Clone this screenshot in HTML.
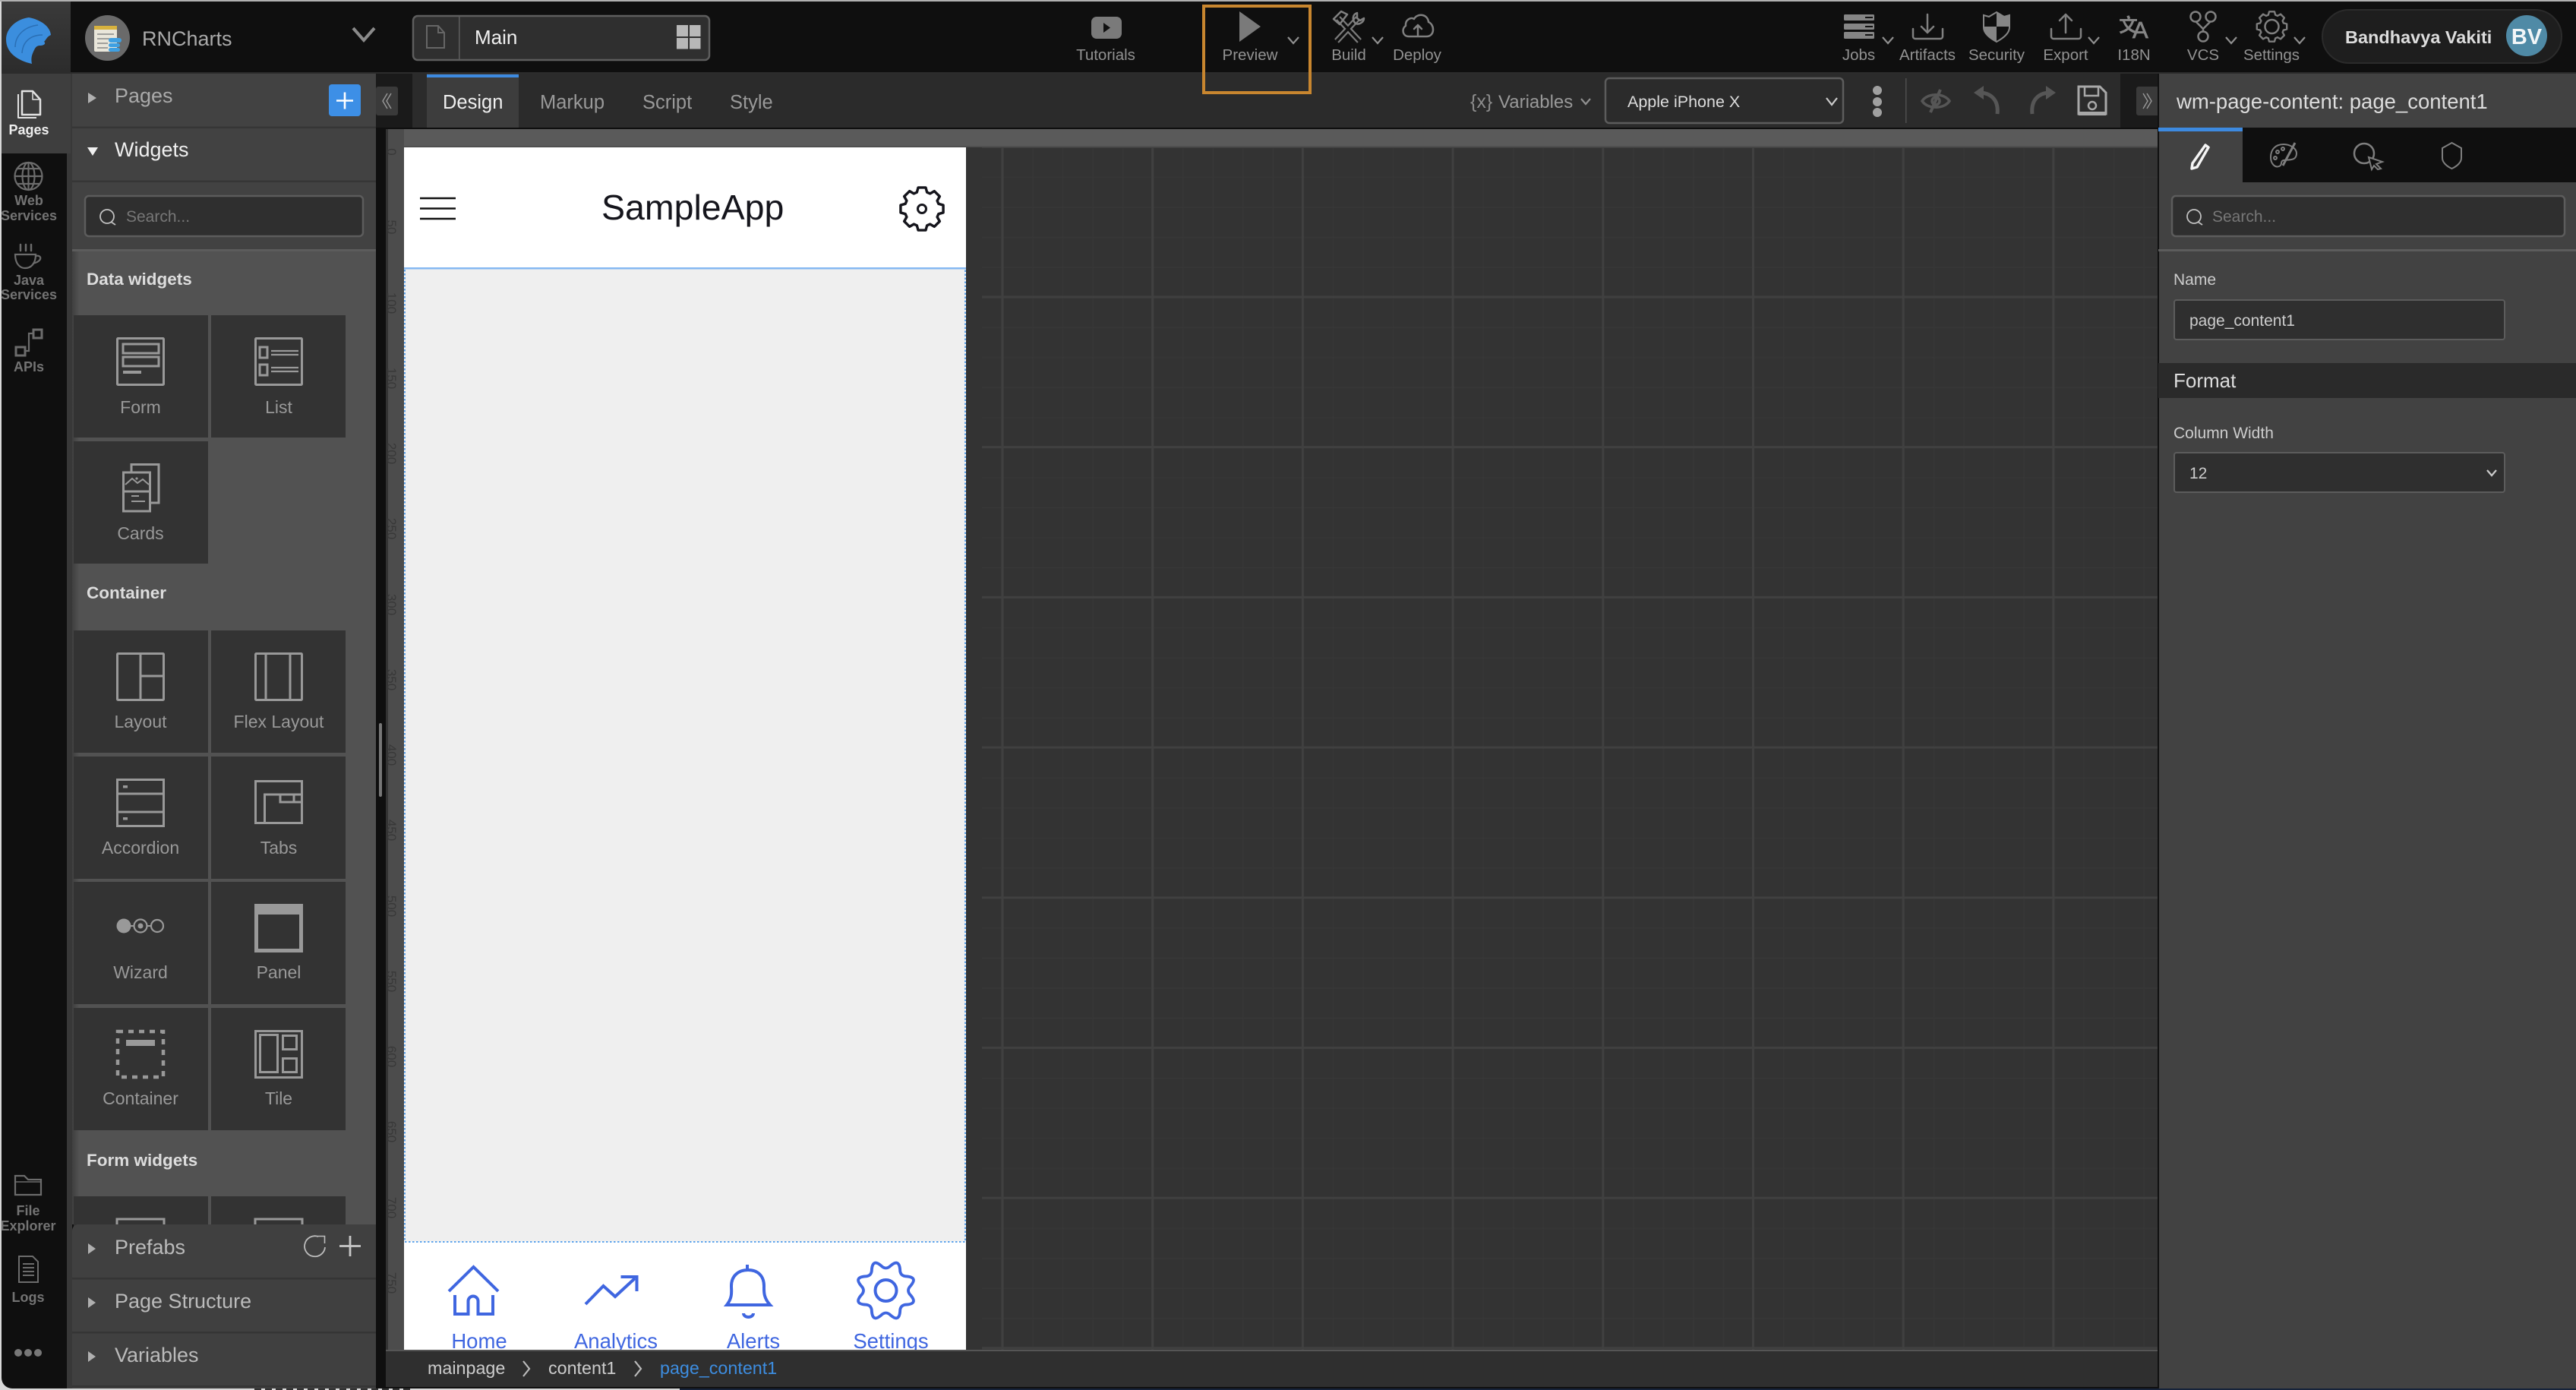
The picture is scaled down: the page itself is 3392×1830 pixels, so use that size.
<!DOCTYPE html>
<html lang="en">
<head>
<meta charset="utf-8">
<title>RNCharts</title>
<style>
html,body{margin:0;padding:0;width:3392px;height:1830px;overflow:hidden;background:#d8d8d8}
svg{display:block;font-family:"Liberation Sans",Arial,sans-serif}
.wl{font-size:23px;fill:#999;text-anchor:middle}
.wh{font-size:22.5px;font-weight:bold;fill:#ddd}
.tb{font-size:20.5px;fill:#929292;text-anchor:middle}
.rl{font-size:18px;font-weight:bold;fill:#737373;text-anchor:middle}
.ic{fill:none;stroke:#999;stroke-width:3}
.tbi{fill:none;stroke:#808080;stroke-width:2.5;stroke-linejoin:round;stroke-linecap:round}
.chev{fill:none;stroke:#909090;stroke-width:2.2}
.ft{font-size:27.5px;fill:#3f66e0;text-anchor:middle}
.fi{fill:none;stroke:#3f66e0;stroke-width:4}
.rn{font-size:17px;fill:#383838;text-anchor:middle}
</style>
</head>
<body>
<svg width="3392" height="1830" viewBox="0 0 3392 1830" xmlns="http://www.w3.org/2000/svg">
<defs>
<pattern id="grid" patternUnits="userSpaceOnUse" x="1318.5" y="389.5" width="197.7" height="197.7">
<rect width="197.7" height="197.7" fill="#333"/>
<g fill="#373737">
<rect x="41" y="0" width="1.2" height="197.7"/><rect x="80.6" y="0" width="1.2" height="197.7"/><rect x="120.1" y="0" width="1.2" height="197.7"/><rect x="159.7" y="0" width="1.2" height="197.7"/>
<rect y="41" x="0" height="1.2" width="197.7"/><rect y="80.6" x="0" height="1.2" width="197.7"/><rect y="120.1" x="0" height="1.2" width="197.7"/><rect y="159.7" x="0" height="1.2" width="197.7"/>
</g>
<rect x="0" y="0" width="3" height="197.7" fill="#404040"/>
<rect x="0" y="0" width="197.7" height="3" fill="#404040"/>
</pattern>
<path id="gear" d="M76.5 -23.4L98.5 -17.4L98.5 17.4L76.5 23.4L70.6 37.6L81.9 57.4L57.4 81.9L37.6 70.6L23.4 76.5L17.4 98.5L-17.4 98.5L-23.4 76.5L-37.6 70.6L-57.4 81.9L-81.9 57.4L-70.6 37.6L-76.5 23.4L-98.5 17.4L-98.5 -17.4L-76.5 -23.4L-70.6 -37.6L-81.9 -57.4L-57.4 -81.9L-37.6 -70.6L-23.4 -76.5L-17.4 -98.5L17.4 -98.5L23.4 -76.5L37.6 -70.6L57.4 -81.9L81.9 -57.4L70.6 -37.6Z"/>
<linearGradient id="lg" x1="0" y1="0" x2="0" y2="1"><stop offset="0" stop-color="#3a3a3a"/><stop offset="1" stop-color="#2c2c2c"/></linearGradient>
<linearGradient id="wsh" x1="0" y1="0" x2="1" y2="0"><stop offset="0" stop-color="#000" stop-opacity=".22"/><stop offset="1" stop-color="#000" stop-opacity="0"/></linearGradient>
</defs>

<!-- page behind the window -->
<rect width="3392" height="1830" fill="#d8d8d8"/>
<path d="M335 1829H542" stroke="#333" stroke-width="2" stroke-dasharray="9 5"/>
<rect x="895" y="1828" width="2497" height="2" fill="#16233a"/>
<rect x="0" y="0" width="3392" height="2" fill="#b0b0b0"/>
<rect x="2" y="2" width="3390" height="1826" rx="14" fill="#0f0f0f"/>
<rect x="1000" y="2" width="2392" height="1826" fill="#0f0f0f"/>

<!-- header -->
<rect x="2" y="2" width="91" height="93" fill="url(#lg)"/>
<rect x="2" y="95" width="3390" height="2.5" fill="#2c2c2c"/>
<path d="M38 23C54 26 66 35 67 46C62 48 61 52 58 55C61 57 58 60 53 60C47 60 46 64 44 68C41 74 41 79 42 84C24 80 8 70 8 52C8 37 22 25 38 23Z" fill="#3b8ede"/>
<path d="M50 33C33 35 20 46 20 62M56 46C41 46 30 54 29 70" fill="none" stroke="#2a6fb5" stroke-width="1.5"/>
<ellipse cx="141.5" cy="50" rx="29.5" ry="30" fill="#6a6a6a"/>
<rect x="124" y="34" width="30" height="34" rx="2" fill="#e9e6da"/>
<rect x="124" y="34" width="30" height="5" fill="#d7b23e"/>
<g stroke="#888" stroke-width="1.5"><path d="M128 45H150M128 51H146M128 57H142M128 63H142"/></g>
<g fill="#3fa0e2"><rect x="143" y="50" width="17" height="6" rx="3"/><rect x="143" y="57" width="15" height="5" rx="2.5"/><rect x="143" y="63" width="15" height="5" rx="2.5"/></g>
<text x="187" y="60" font-size="27" fill="#aaa">RNCharts</text>
<path d="M465 37L479 53L493 37" fill="none" stroke="#8a8a8a" stroke-width="4"/>
<rect x="544" y="21" width="390" height="58" rx="6" fill="#2f2f2f" stroke="#5e5e5e" stroke-width="2.5"/>
<rect x="604" y="21" width="1.5" height="58" fill="#5e5e5e"/>
<path d="M562 34H577L585 43V63H562Z M577 34V43H585" fill="none" stroke="#666" stroke-width="2"/>
<text x="625" y="58" font-size="26" fill="#f0f0f0">Main</text>
<g fill="#b8b8b8"><rect x="891" y="33" width="15" height="15"/><rect x="908" y="33" width="14.5" height="15"/><rect x="891" y="50" width="15" height="14.5"/><rect x="908" y="50" width="14.5" height="14.5"/></g>

<!-- header toolbar center -->
<rect x="1437" y="22" width="40" height="29" rx="7" fill="#7a7a7a"/>
<path d="M1453 30L1462 36.5L1453 43Z" fill="#111"/>
<text class="tb" x="1456" y="79">Tutorials</text>
<path d="M1632 15L1660 35L1632 55Z" fill="#7a7a7a"/>
<text class="tb" x="1646" y="79">Preview</text>
<path class="chev" d="M1696 49L1703 57L1710 49"/>
<path d="M1762 24L1790 54M1760 54L1788 24" stroke="#7a7a7a" stroke-width="8" fill="none"/>
<path d="M1762 24L1790 54M1760 54L1788 24" stroke="#0f0f0f" stroke-width="3.5" fill="none"/>
<path class="tbi" d="M1756 25L1766 15L1774 19L1764 32ZM1787 17C1781 19 1780 26 1785 31C1790 33 1796 29 1796 24L1791 27L1787 24Z"/>
<path class="chev" d="M1807 49L1814 57L1821 49"/>
<text class="tb" x="1776" y="79">Build</text>
<path class="tbi" d="M1855 48C1847 48 1845 38 1851 34C1850 26 1858 22 1862 25C1866 17 1880 18 1881 29C1889 32 1890 48 1878 48Z M1867 46V33M1862 38L1867 33L1872 38"/>
<text class="tb" x="1866" y="79">Deploy</text>

<!-- header toolbar right -->
<g fill="#858585"><rect x="2428" y="19" width="40" height="8" rx="1.5"/><rect x="2428" y="31" width="40" height="8" rx="1.5"/><rect x="2428" y="42" width="40" height="9" rx="1.5"/></g>
<g fill="#111"><rect x="2456" y="22" width="10" height="2"/><rect x="2456" y="34" width="10" height="2"/><rect x="2456" y="45" width="10" height="2"/></g>
<path class="chev" d="M2479 49L2486 57L2493 49"/>
<text class="tb" x="2447.5" y="79">Jobs</text>
<path class="tbi" d="M2538 19V43M2530 35L2538 43L2546 35M2519 38V48A3 3 0 0 0 2522 51H2555A3 3 0 0 0 2558 48V38"/>
<text class="tb" x="2538" y="79">Artifacts</text>
<path d="M2612 20L2619 22L2629 16L2639 22L2646 20V36C2646 44 2638 50 2629 55C2620 50 2612 44 2612 36Z" fill="#0f0f0f" stroke="#858585" stroke-width="2"/>
<path d="M2629 16L2639 22L2646 20V35H2629ZM2629 35H2612C2612 44 2620 50 2629 55Z" fill="#858585"/>
<text class="tb" x="2629" y="79">Security</text>
<path class="tbi" d="M2720 43V19M2712 27L2720 19L2728 27M2701 38V48A3 3 0 0 0 2704 51H2737A3 3 0 0 0 2740 48V38"/>
<path class="chev" d="M2750 49L2757 57L2764 49"/>
<text class="tb" x="2720" y="79">Export</text>
<text x="2790" y="42" font-size="25" font-weight="bold" fill="#858585" font-family="'Noto Sans CJK SC',sans-serif">文</text>
<text x="2808" y="50" font-size="31" fill="#858585" stroke="#858585" stroke-width=".8">A</text>
<text class="tb" x="2810" y="79">I18N</text>
<g class="tbi"><circle cx="2891" cy="22" r="6.5"/><circle cx="2911" cy="22" r="6.5"/><ellipse cx="2901" cy="48" rx="6.5" ry="6.5"/><path d="M2892 29L2901 38L2910 29M2901 38V41"/></g>
<path class="chev" d="M2931 49L2938 57L2945 49"/>
<text class="tb" x="2901" y="79">VCS</text>
<use href="#gear" transform="translate(2991.5 35) scale(.2)" fill="none" stroke="#7e7e7e" stroke-width="12" stroke-linejoin="round"/>
<circle cx="2991.5" cy="35" r="9" class="tbi"/>
<path class="chev" d="M3021 49L3028 57L3035 49"/>
<text class="tb" x="2991" y="79">Settings</text>
<rect x="3058" y="13" width="315" height="70" rx="35" fill="#1e1e1e" stroke="#2b2b2b" stroke-width="2"/>
<text x="3088" y="57" font-size="23.5" font-weight="bold" fill="#ddd">Bandhavya Vakiti</text>
<ellipse cx="3327" cy="47" rx="27" ry="27" fill="#4f8aa6"/>
<text x="3327" y="58" font-size="29" font-weight="bold" fill="#f2f6f8" text-anchor="middle">BV</text>

<!-- left rail -->
<rect x="88" y="97" width="7" height="1731" fill="#383838"/>
<rect x="2" y="97" width="91" height="105" fill="#3e3e3e"/>
<g fill="none" stroke="#e2e2e2" stroke-width="2.5" stroke-linejoin="round">
<path d="M29 120H43L53 131V151H29Z"/><path d="M24 124V155H48" stroke-width="2"/><path d="M43 120V131H53" stroke-width="1.5"/>
</g>
<text class="rl" x="38" y="177" style="fill:#eee">Pages</text>
<g fill="none" stroke="#6c6c6c" stroke-width="2.2">
<circle cx="37.5" cy="232" r="18"/><ellipse cx="37.5" cy="232" rx="8" ry="18"/><path d="M37.5 214V250M19.5 232H55.5M22 222H53M22 242H53"/>
<path d="M27 330V322M34 330V322M41 330V322" stroke-linecap="round" stroke-width="2.5"/>
<path d="M20 335H47C47 347 41 353 33 353C26 353 20 347 20 335ZM47 337C55 335 57 344 43 347"/>
</g>
<text class="rl" x="38" y="270">Web</text>
<text class="rl" x="38" y="290">Services</text>
<text class="rl" x="38" y="375">Java</text>
<text class="rl" x="38" y="394">Services</text>
<g fill="none" stroke="#6c6c6c" stroke-width="3"><rect x="21" y="457" width="12" height="11"/><rect x="44" y="434" width="11" height="11"/><path d="M33 462H38V439H44" stroke-width="2.2"/></g>
<text class="rl" x="38" y="489">APIs</text>
<path d="M20 1573V1548H32L37 1553H54V1573Z" fill="none" stroke="#6c6c6c" stroke-width="2.2"/>
<path d="M20 1556H54" fill="none" stroke="#6c6c6c" stroke-width="1.5"/>
<text class="rl" x="37" y="1600">File</text>
<text class="rl" x="37" y="1620">Explorer</text>
<path d="M25 1654H43L50 1661V1688H25ZM30 1664H45M30 1669H45M30 1674H45M30 1679H45" fill="none" stroke="#6c6c6c" stroke-width="2"/>
<text class="rl" x="37" y="1714">Logs</text>
<g fill="#777"><circle cx="24" cy="1781" r="5"/><circle cx="37" cy="1781" r="5"/><circle cx="50" cy="1781" r="5"/></g>

<!-- left panel -->
<rect x="95" y="97" width="400" height="234" fill="#424242"/>
<rect x="95" y="166.5" width="400" height="2.5" fill="#363636"/>
<rect x="95" y="237.5" width="400" height="2.5" fill="#363636"/>
<rect x="95" y="328" width="400" height="3" fill="#5c5c5c"/>
<path d="M116 122L127 129L116 136Z" fill="#b0b0b0"/>
<text x="151" y="135" font-size="27" fill="#aaa">Pages</text>
<rect x="433" y="111" width="42" height="42" rx="4" fill="#3d8fe6"/>
<path d="M443 132.500H465M454 121.500V143.500" stroke="#fff" stroke-width="2.6"/>
<path d="M115 194H129L122 205Z" fill="#f0f0f0"/>
<text x="151" y="206" font-size="27" fill="#f0f0f0">Widgets</text>
<rect x="112" y="258" width="366" height="53" rx="5" fill="#2f2f2f" stroke="#5c5c5c" stroke-width="2.5"/>
<circle cx="141" cy="285" r="9" fill="none" stroke="#c0c0c0" stroke-width="1.8"/><path d="M146 292L152 296" stroke="#c0c0c0" stroke-width="1.8"/>
<text x="166" y="292" font-size="21" fill="#777">Search...</text>

<!-- widgets -->
<rect x="95" y="331" width="400" height="1281" fill="#525252"/>
<rect x="95" y="331" width="10" height="1281" fill="url(#wsh)"/>
<text class="wh" x="114" y="375">Data widgets</text>
<text class="wh" x="114" y="788">Container</text>
<text class="wh" x="114" y="1535">Form widgets</text>
<g fill="#333">
<rect x="97" y="415" width="177" height="161"/><rect x="278" y="415" width="177" height="161"/>
<rect x="97" y="581" width="177" height="161"/>
<rect x="97" y="830" width="177" height="161"/><rect x="278" y="830" width="177" height="161"/>
<rect x="97" y="996" width="177" height="161"/><rect x="278" y="996" width="177" height="161"/>
<rect x="97" y="1161" width="177" height="161"/><rect x="278" y="1161" width="177" height="161"/>
<rect x="97" y="1327" width="177" height="161"/><rect x="278" y="1327" width="177" height="161"/>
<rect x="97" y="1575" width="177" height="40"/><rect x="278" y="1575" width="177" height="40"/>
</g>
<text class="wl" x="185" y="544">Form</text><text class="wl" x="367" y="544">List</text>
<text class="wl" x="185" y="710">Cards</text>
<text class="wl" x="185" y="958">Layout</text><text class="wl" x="367" y="958">Flex Layout</text>
<text class="wl" x="185" y="1124">Accordion</text><text class="wl" x="367" y="1124">Tabs</text>
<text class="wl" x="185" y="1288">Wizard</text><text class="wl" x="367" y="1288">Panel</text>
<text class="wl" x="185" y="1454">Container</text><text class="wl" x="367" y="1454">Tile</text>

<g transform="translate(153 444)" class="ic"><rect x="1.5" y="1.500" width="61" height="61" rx="1"/><rect x="9" y="9" width="47" height="12"/><rect x="9" y="26" width="47" height="12"/><rect x="9" y="44" width="24" height="4" fill="#999" stroke="none"/></g>
<g transform="translate(335 444)" class="ic"><rect x="1.5" y="1.500" width="61" height="61" rx="1"/><rect x="7" y="13" width="10" height="14"/><rect x="7" y="36" width="10" height="14"/><path d="M22 18H58M22 23H58M22 40H58M22 45H58" stroke-width="2.2"/></g>
<g transform="translate(161 610)" class="ic"><path d="M12 11V1.500H48V52H38"/><rect x="1.500" y="12" width="35" height="51"/><path d="M1.500 37H36.500" /><path d="M4 28L13 20L20 26L27 21L35 28" stroke-width="2"/><circle cx="19" cy="20" r="1.6" fill="#999" stroke="none"/><path d="M12 43H22M12 50H30" stroke-width="2"/></g>

<g transform="translate(153 859)" class="ic"><rect x="1.5" y="1.500" width="61" height="61" rx="1"/><path d="M32 1.500V62.500M32 31H62.500"/></g>
<g transform="translate(335 859)" class="ic"><rect x="1.5" y="1.500" width="61" height="61" rx="1"/><path d="M15 1.500V62.500M47 1.500V62.500"/></g>
<g transform="translate(153 1025)" class="ic"><rect x="1.5" y="1.500" width="61" height="61"/><path d="M1.500 20H62.500M1.500 44H62.500"/><rect x="9" y="9" width="6" height="3.500" fill="#999" stroke="none"/><rect x="9" y="51" width="6" height="3.500" fill="#999" stroke="none"/></g>
<g transform="translate(335 1027)" class="ic"><rect x="1.5" y="1.500" width="61" height="55"/><path d="M13.500 56V19H62M34 19V29H62M52 19V29"/></g>
<g transform="translate(153 1190)" class="ic"><circle cx="10" cy="29" r="9.500" fill="#999" stroke="none"/><circle cx="32" cy="29" r="8.500" stroke-width="2.200"/><circle cx="32" cy="29" r="3.500" fill="#999" stroke="none"/><circle cx="54" cy="29" r="8" stroke-width="2.200"/><path d="M19 29H23M41 29H46" stroke-width="2"/></g>
<g transform="translate(335 1190)"><rect width="64" height="64" fill="#999"/><rect x="5" y="14" width="54" height="45" fill="#333"/></g>
<g transform="translate(153 1356)" class="ic"><rect x="2" y="2" width="60" height="60" stroke-width="4.500" stroke-dasharray="7 7"/><rect x="13" y="13" width="38" height="8" fill="#999" stroke="none"/></g>
<g transform="translate(335 1356)" class="ic"><rect x="1.5" y="1.500" width="61" height="61"/><rect x="7.500" y="6.500" width="23" height="49"/><rect x="37.500" y="7.500" width="18" height="18"/><rect x="37.500" y="37.500" width="18" height="18"/></g>
<rect x="154" y="1605" width="62" height="20" fill="none" stroke="#999" stroke-width="3"/>
<rect x="336" y="1605" width="62" height="20" fill="none" stroke="#999" stroke-width="3"/>

<!-- prefabs etc -->
<path d="M95 1828V1620A8 8 0 0 1 103 1612H495V1828Z" fill="#404040"/>
<rect x="95" y="1682" width="400" height="2.500" fill="#353535"/>
<rect x="95" y="1753" width="400" height="2.500" fill="#353535"/>
<rect x="95" y="1824" width="400" height="2.500" fill="#353535"/>
<path d="M116 1637L126 1644L116 1651Z" fill="#b0b0b0"/>
<path d="M116 1708L126 1715L116 1722Z" fill="#b0b0b0"/>
<path d="M116 1779L126 1786L116 1793Z" fill="#b0b0b0"/>
<text x="151" y="1651" font-size="27" fill="#bbb">Prefabs</text>
<text x="151" y="1722" font-size="27" fill="#bbb">Page Structure</text>
<text x="151" y="1793" font-size="27" fill="#bbb">Variables</text>
<path d="M419 1628A13.500 13.500 0 1 0 428 1642" fill="none" stroke="#bdbdbd" stroke-width="1.800"/>
<path d="M418 1627.500H427.500V1637" fill="none" stroke="#bdbdbd" stroke-width="1.600"/>
<path d="M447 1640.500H475M461 1627V1654" stroke="#c8c8c8" stroke-width="2.800"/>

<!-- splitter -->
<rect x="495" y="97" width="13" height="1731" fill="#0f0f0f"/>
<rect x="499" y="952" width="4" height="97" rx="2" fill="#777"/>

<!-- design tabs -->
<rect x="508" y="97" width="2284" height="71" fill="#2b2b2b"/>
<rect x="495" y="97" width="48" height="71" fill="#1a1a1a"/>
<rect x="495" y="114" width="29" height="38" rx="3" fill="#3a3a3a"/>
<path d="M510 123L504 133L510 143M515 123L509 133L515 143" fill="none" stroke="#999" stroke-width="1.400"/>
<rect x="562" y="97" width="121" height="71" fill="#3d3d3d"/>
<rect x="562" y="98" width="121" height="4" fill="#3d8ae0"/>
<g font-size="25.5"><text x="583" y="143" fill="#f0f0f0">Design</text><text x="711" y="143" fill="#999">Markup</text><text x="846" y="143" fill="#999">Script</text><text x="961" y="143" fill="#999">Style</text></g>

<text x="1936" y="142" font-size="25" fill="#8c8c8c">{x}</text>
<text x="1973" y="142" font-size="24" fill="#999">Variables</text>
<path class="chev" d="M2082 130L2088 137L2094 130"/>
<rect x="2114" y="103" width="313" height="59" rx="5" fill="#2b2b2b" stroke="#5c5c5c" stroke-width="2.500"/>
<text x="2143" y="141" font-size="21.500" fill="#ddd">Apple iPhone X</text>
<path class="chev" d="M2405 129L2412 138L2419 129" style="stroke:#ccc"/>
<g fill="#a0a0a0"><circle cx="2472" cy="119" r="6"/><circle cx="2472" cy="134" r="6"/><circle cx="2472" cy="148" r="6"/></g>
<rect x="2509" y="103" width="1.500" height="59" fill="#4e4e4e"/>
<g fill="none" stroke="#565656" stroke-width="3.500"><path d="M2531 133C2538 122 2560 122 2567 133C2560 144 2538 144 2531 133Z"/><path d="M2555 118L2542 148" stroke-width="4"/><circle cx="2549" cy="133" r="5"/></g>
<path d="M2630 150C2632 132 2622 122 2606 122" fill="none" stroke="#565656" stroke-width="5"/>
<path d="M2599 122L2612 113V131Z" fill="#565656"/>
<path d="M2676 150C2674 132 2684 122 2700 122" fill="none" stroke="#565656" stroke-width="5"/>
<path d="M2707 122L2694 113V131Z" fill="#565656"/>
<path d="M2737 114H2765L2773 122V150H2737Z" fill="none" stroke="#a8a8a8" stroke-width="3"/>
<rect x="2737" y="147" width="36" height="5" fill="#a8a8a8"/>
<rect x="2745" y="114" width="18" height="12" fill="none" stroke="#a8a8a8" stroke-width="2.500"/>
<circle cx="2755" cy="139" r="5" fill="none" stroke="#a8a8a8" stroke-width="2.500"/>
<rect x="2792" y="97" width="50" height="71" fill="#1a1a1a"/>
<path d="M2842 114H2816A3 3 0 0 0 2813 117V149A3 3 0 0 0 2816 152H2842Z" fill="#3a3a3a"/>
<path d="M2822 123L2828 133L2822 143M2827 123L2833 133L2827 143" fill="none" stroke="#999" stroke-width="1.400"/>
<rect x="495" y="168" width="2347" height="2.500" fill="#0f0f0f"/>

<!-- canvas -->
<rect x="508" y="170" width="2334" height="24" fill="#5a5a5a"/>
<rect x="532" y="192.500" width="2310" height="1.500" fill="#4a4a4a"/>
<rect x="508" y="170" width="3" height="1610" fill="#333"/>
<rect x="511" y="170" width="21" height="1610" fill="#4c4c4c"/>
<rect x="1272" y="194" width="1570" height="1584" fill="#333"/>
<rect x="1293" y="194" width="1549" height="1584" fill="url(#grid)"/>
<g class="rn">
<text class="rn" x="516" y="206" transform="rotate(90 516 200)">0</text>
<text class="rn" x="516" y="305" transform="rotate(90 516 299)">50</text>
<text class="rn" x="516" y="405" transform="rotate(90 516 399)">100</text>
<text class="rn" x="516" y="504" transform="rotate(90 516 498)">150</text>
<text class="rn" x="516" y="603" transform="rotate(90 516 597)">200</text>
<text class="rn" x="516" y="702" transform="rotate(90 516 696)">250</text>
<text class="rn" x="516" y="802" transform="rotate(90 516 796)">300</text>
<text class="rn" x="516" y="901" transform="rotate(90 516 895)">350</text>
<text class="rn" x="516" y="1000" transform="rotate(90 516 994)">400</text>
<text class="rn" x="516" y="1099" transform="rotate(90 516 1093)">450</text>
<text class="rn" x="516" y="1199" transform="rotate(90 516 1193)">500</text>
<text class="rn" x="516" y="1298" transform="rotate(90 516 1292)">550</text>
<text class="rn" x="516" y="1397" transform="rotate(90 516 1391)">600</text>
<text class="rn" x="516" y="1496" transform="rotate(90 516 1490)">650</text>
<text class="rn" x="516" y="1596" transform="rotate(90 516 1590)">700</text>
<text class="rn" x="516" y="1695" transform="rotate(90 516 1689)">750</text>
</g>

<!-- phone -->
<rect x="532" y="194" width="740" height="1584" fill="#fff"/>
<rect x="532" y="352" width="740" height="2.500" fill="#86b9f2"/>
<rect x="533" y="354.500" width="738" height="1280" fill="#efefef"/>
<path d="M533 355V1635H1271V355" fill="none" stroke="#2f8ae8" stroke-width="1.500" stroke-dasharray="2.500 2.500"/>
<path d="M553 261H600M553 274.500H600M553 288H600" stroke="#111" stroke-width="2.500"/>
<text x="792" y="289" font-size="46.5" fill="#15151c">SampleApp</text>
<use href="#gear" transform="translate(1214 275) scale(.285)" fill="none" stroke="#15151c" stroke-width="12" stroke-linejoin="round"/>
<circle cx="1214" cy="275" r="5.500" fill="none" stroke="#15151c" stroke-width="3"/>

<g class="fi">
<path d="M591 1700L623.500 1668L656 1700"/>
<path d="M599 1705V1730H616.500V1713A6.500 6.500 0 0 1 629.500 1713V1730H649V1705"/>
<path d="M771 1717L794.500 1693L810 1707L836 1683"/>
<path d="M817.500 1681H838.500V1700"/>
<path d="M984 1665V1672M957 1718C965 1708 963 1700 963 1693C963 1680 972 1672 985 1672C998 1672 1006 1680 1006 1693C1006 1700 1005 1708 1014 1718Z"/>
<path d="M979 1729A6.500 5 0 0 0 992 1729"/>
<path transform="translate(1166.500 1699) scale(.385)" stroke-width="10" d="M85.300 -17Q68 0 85.300 17Q109 45 72.300 48.300Q48 48 48.300 72.300Q45 109 17 85.300Q0 68 -17 85.300Q-45 109 -48.300 72.300Q-48 48 -72.300 48.300Q-109 45 -85.300 17Q-68 0 -85.300 -17Q-109 -45 -72.300 -48.300Q-48 -48 -48.300 -72.300Q-45 -109 -17 -85.300Q0 -68 17 -85.300Q45 -109 48.300 -72.300Q48 -48 72.300 -48.300Q109 -45 85.300 -17Z"/>
<circle cx="1166.500" cy="1699" r="14"/>
</g>
<text class="ft" x="631" y="1775">Home</text>
<text class="ft" x="811" y="1775">Analytics</text>
<text class="ft" x="992" y="1775">Alerts</text>
<text class="ft" x="1173" y="1775">Settings</text>

<!-- breadcrumb -->
<rect x="508" y="1777" width="2334" height="2.500" fill="#555"/>
<rect x="508" y="1779" width="2334" height="47" fill="#2f2f2f"/>
<rect x="508" y="1826" width="2334" height="2" fill="#0f0f0f"/>
<text x="563" y="1809" font-size="23.300" fill="#ccc">mainpage</text>
<path d="M689 1792L697 1802L689 1812" fill="none" stroke="#bbb" stroke-width="2.200"/>
<text x="722" y="1809" font-size="23.300" fill="#ccc">content1</text>
<path d="M836 1792L844 1802L836 1812" fill="none" stroke="#bbb" stroke-width="2.200"/>
<text x="869" y="1809" font-size="23.300" fill="#3d8de0">page_content1</text>

<!-- right panel -->
<rect x="2842" y="97" width="550" height="1731" fill="#424242"/>
<rect x="2841" y="97" width="2" height="1731" fill="#111"/>
<text x="2866" y="143" font-size="27.500" fill="#ddd">wm-page-content: page_content1</text>
<rect x="2953" y="168" width="439" height="72" fill="#0f0f0f"/>
<rect x="2842" y="168" width="111" height="5" fill="#3d8ae0"/>
<path d="M2904 191L2908 194L2893 220L2886 222L2887 215Z" fill="none" stroke="#f5f5f5" stroke-width="3.500" stroke-linejoin="round"/>
<g fill="none" stroke="#7e7e7e" stroke-width="2">
<path d="M3007 190C2995 190 2990 198 2990 207C2990 216 2996 221 3001 219C3006 217 3002 212 3007 211C3014 210 3024 212 3024 202C3024 195 3015 190 3007 190Z"/>
<path d="M3022 188L3006 218" stroke-width="3"/>
<circle cx="2999" cy="200" r="2"/><circle cx="3006" cy="196" r="2"/><circle cx="2996" cy="208" r="2"/>
<circle cx="3113" cy="202" r="13" stroke-width="2.500"/>
<path d="M3119 207L3137 213L3129 216L3135 222L3131 223L3126 218L3123 223Z" fill="#0f0f0f"/>
<path d="M3228.500 188L3241 195V208C3241 214 3235 219 3228.500 222C3222 219 3216 214 3216 208V195Z"/>
</g>
<rect x="2860" y="258" width="517" height="53" rx="5" fill="#2f2f2f" stroke="#5c5c5c" stroke-width="2.500"/>
<circle cx="2889" cy="285" r="9" fill="none" stroke="#c0c0c0" stroke-width="1.800"/><path d="M2894 292L2900 296" stroke="#c0c0c0" stroke-width="1.800"/>
<text x="2913" y="292" font-size="21" fill="#777">Search...</text>
<rect x="2842" y="328" width="550" height="3" fill="#5c5c5c"/>
<text x="2862" y="375" font-size="21" fill="#ccc">Name</text>
<rect x="2863" y="395" width="435" height="52" rx="3" fill="#2f2f2f" stroke="#5c5c5c" stroke-width="2"/>
<text x="2883" y="429" font-size="21" fill="#ccc">page_content1</text>
<rect x="2842" y="478" width="550" height="46" fill="#2a2a2a"/>
<text x="2862" y="510" font-size="26" fill="#ddd">Format</text>
<text x="2862" y="577" font-size="21" fill="#ccc">Column Width</text>
<rect x="2863" y="596" width="435" height="52" rx="3" fill="#2f2f2f" stroke="#5c5c5c" stroke-width="2"/>
<text x="2883" y="630" font-size="21" fill="#ccc">12</text>
<path d="M3275 619L3281 626L3287 619" fill="none" stroke="#ccc" stroke-width="2.200"/>

<!-- preview highlight on top -->
<rect x="1585" y="8" width="140" height="114" fill="none" stroke="#c8862f" stroke-width="4"/>
</svg>
</body>
</html>
